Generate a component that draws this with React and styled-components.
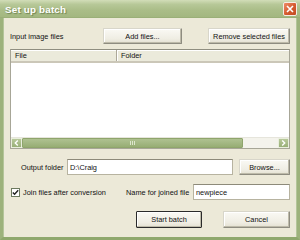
import React from "react";
import styled, { createGlobalStyle } from "styled-components";

const Global = createGlobalStyle`
  html, body { margin: 0; padding: 0; background: #ECE9D8; }
  body { font-family: "Liberation Sans", Arial, sans-serif; font-size: 7.35px; color: #111; }
  * { box-sizing: border-box; }
`;

const Window = styled.div`
  width: 300px;
  height: 240px;
  display: flex;
  flex-direction: column;
  overflow: hidden;
`;

const TitleBar = styled.div`
  height: 18px;
  flex: none;
  display: flex;
  align-items: center;
  padding: 0 3px 0 5px;
  background: linear-gradient(#D2DDB8 0%, #B7C898 25%, #AABD88 60%, #A3B780 100%);
  border-bottom: 1px solid #9AAF78;
`;

const Title = styled.div`
  flex: 1;
  color: #fff;
  font-weight: bold;
  font-size: 9.8px;
  letter-spacing: 0.2px;
  text-shadow: 1px 1px 1px #6E8350;
  padding-top: 1px;
`;

const CloseBtn = styled.div`
  width: 14px;
  height: 14px;
  border-radius: 2px;
  border: 1px solid #F4EDE6;
  background: linear-gradient(135deg, #EE8C68, #D45A2E 55%, #C24A22);
  display: flex;
  align-items: center;
  justify-content: center;
`;

const Frame = styled.div`
  flex: 1;
  display: flex;
  flex-direction: column;
  background: #ECE9D8;
  border-left: 3px solid #9DB27C;
  border-right: 3px solid #9DB27C;
  border-bottom: 3px solid #8FA86D;
  box-shadow: inset 1px 0 0 #B4C59A, inset -1px 0 0 #B4C59A;
  padding: 10px 7px 0 7px;
`;

const Row = styled.div`
  display: flex;
  align-items: center;
  height: ${(p) => p.$h || 16}px;
  margin-top: ${(p) => p.$mt || 0}px;
`;

const Label = styled.span`
  white-space: nowrap;
  flex: none;
  width: ${(p) => (p.$w ? p.$w + "px" : "auto")};
  padding-left: ${(p) => p.$pl || 0}px;
`;

const Button = styled.button`
  font-family: inherit;
  font-size: 7.35px;
  color: #111;
  height: ${(p) => p.$h || 16}px;
  width: ${(p) => p.$w}px;
  margin-left: ${(p) => (p.$auto ? "auto" : (p.$ml || 0) + "px")};
  padding: 0;
  border: 1px solid ${(p) => (p.$default ? "#2B2B2B" : "#8E8C80")};
  border-top-color: ${(p) => (p.$default ? "#2B2B2B" : "#D8D6CA")};
  border-left-color: ${(p) => (p.$default ? "#2B2B2B" : "#D8D6CA")};
  border-radius: 1px;
  background: linear-gradient(#FAF9F4, #EFEDE3 70%, #E4E1D2);
  box-shadow: inset -1px -1px 0 #BDBAA9, inset 1px 1px 0 #FFFFFF;
  flex: none;
`;

const Input = styled.div`
  height: 16px;
  width: ${(p) => p.$w}px;
  margin-left: ${(p) => p.$ml || 0}px;
  flex: none;
  background: #fff;
  border: 1px solid #B7B3A0;
  border-top-color: #8D8A7A;
  display: flex;
  align-items: center;
  padding-left: 2px;
`;

const List = styled.div`
  margin-top: 5px;
  height: 100px;
  background: #fff;
  border: 1px solid #A7A697;
  border-top-color: #8F8E80;
  display: flex;
  flex-direction: column;
`;

const Header = styled.div`
  height: 13px;
  flex: none;
  display: flex;
  background: #EBEADB;
  border-bottom: 2px solid #CBC7B8;
  box-shadow: inset 0 1px 0 #fff;
`;

const HeadCell = styled.div`
  width: ${(p) => (p.$w ? p.$w + "px" : "auto")};
  flex: ${(p) => (p.$w ? "none" : 1)};
  padding-left: 4px;
  display: flex;
  align-items: center;
  border-right: ${(p) => (p.$w ? "1px solid #ACA899" : "none")};
  box-shadow: ${(p) => (p.$w ? "1px 0 0 #fff" : "none")};
`;

const ListBody = styled.div`
  flex: 1;
`;

const HScroll = styled.div`
  height: 11px;
  flex: none;
  display: flex;
  background: #F4F3EC;
  border-top: 1px solid #E6E5DC;
`;

const ArrowBtn = styled.div`
  width: 11px;
  flex: none;
  background: linear-gradient(#B7C89A, #99AF77);
  border: 1px solid #E8EEDC;
  border-radius: 1px;
  display: flex;
  align-items: center;
  justify-content: center;
`;

const Thumb = styled.div`
  width: ${(p) => p.$w}px;
  flex: none;
  background: linear-gradient(#AFC191, #97AD74);
  border: 1px solid #8FA56C;
  border-radius: 1px;
  display: flex;
  align-items: center;
  justify-content: center;
`;

const Grip = styled.div`
  width: 5px;
  height: 4px;
  background: repeating-linear-gradient(90deg, #DDE6CD 0 1px, transparent 1px 2px);
`;

const Check = styled.div`
  width: 9px;
  height: 9px;
  flex: none;
  margin-left: 1px;
  margin-right: 3px;
  background: #fff;
  border: 1px solid #6D7A5F;
  display: flex;
  align-items: center;
  justify-content: center;
`;

const Spacer = styled.div`
  flex: 1;
`;

export default function App() {
  return (
    <>
      <Global />
      <Window>
        <TitleBar>
          <Title>Set up batch</Title>
          <CloseBtn>
            <svg width="8" height="8" viewBox="0 0 8 8">
              <path d="M1 1 L7 7 M7 1 L1 7" stroke="#fff" strokeWidth="1.6" />
            </svg>
          </CloseBtn>
        </TitleBar>
        <Frame>
          <Row>
            <Label $w={93}>Input image files</Label>
            <Button $w={79}>Add files...</Button>
            <Button $w={82} $auto>Remove selected files</Button>
          </Row>
          <List>
            <Header>
              <HeadCell $w={106}>File</HeadCell>
              <HeadCell>Folder</HeadCell>
            </Header>
            <ListBody />
            <HScroll>
              <ArrowBtn>
                <svg width="5" height="6" viewBox="0 0 5 6">
                  <path d="M3.8 0.6 L1.3 3 L3.8 5.4" stroke="#fff" strokeWidth="1.4" fill="none" />
                </svg>
              </ArrowBtn>
              <Thumb $w={221}>
                <Grip />
              </Thumb>
              <Spacer />
              <ArrowBtn>
                <svg width="5" height="6" viewBox="0 0 5 6">
                  <path d="M1.2 0.6 L3.7 3 L1.2 5.4" stroke="#fff" strokeWidth="1.4" fill="none" />
                </svg>
              </ArrowBtn>
            </HScroll>
          </List>
          <Row $mt={10}>
            <Label $w={57} $pl={11}>Output folder</Label>
            <Input $w={166}>D:\Craig</Input>
            <Button $w={51} $auto>Browse...</Button>
          </Row>
          <Row $mt={9}>
            <Check>
              <svg width="7" height="7" viewBox="0 0 7 7">
                <path d="M0.8 3.4 L2.6 5.3 L6.2 1.2" stroke="#222" strokeWidth="1.4" fill="none" />
              </svg>
            </Check>
            <Label $w={103}>Join files after conversion</Label>
            <Label>Name for joined file</Label>
            <Spacer />
            <Input $w={97}>newpiece</Input>
          </Row>
          <Row $mt={11} $h={17}>
            <Spacer />
            <Button $w={66} $h={17} $default>Start batch</Button>
            <Button $w={67} $h={17} $ml={21}>Cancel</Button>
          </Row>
        </Frame>
      </Window>
    </>
  );
}
